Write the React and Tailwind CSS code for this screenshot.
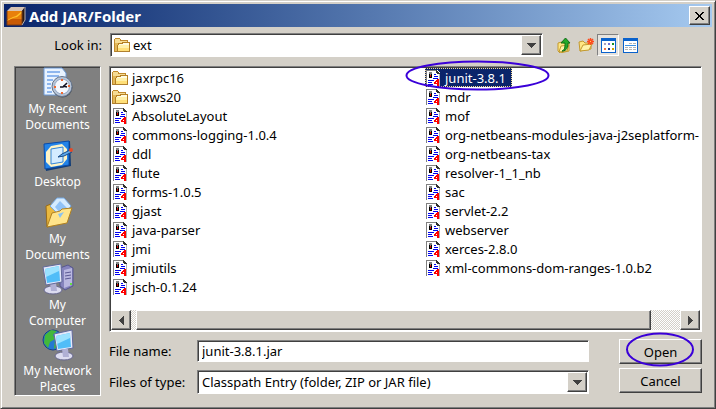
import React from "react";

const raised =
  "border border-t-white border-l-white border-r-[#404040] border-b-[#404040] bg-[#d4d0c8] shadow-[inset_-1px_-1px_0_#808080]";
const sunken =
  "border border-t-[#808080] border-l-[#808080] border-r-white border-b-white";

function Folder() {
  return (
    <svg width="16" height="16" viewBox="0 0 16 16" shapeRendering="crispEdges" aria-hidden="true" className="shrink-0">
      <path d="M0 2h1V1h5v1h1v1h7v3h2v9H0z" fill="#c08a2c" />
      <path d="M1 2h5v2h7v2H1z" fill="#f6dc94" />
      <path d="M1 6h3v8H1z" fill="#e2b85a" />
      <path d="M3 8h1V6h4V5h8v9H3z" fill="#b57f22" />
      <path d="M5 7h4V6h6v2H5z" fill="#fffbe0" />
      <path d="M4 8h11v3H4z" fill="#fff0a8" />
      <path d="M4 11h11v3H4z" fill="#ffdf78" />
      <path d="M1 14h15v1H1z" fill="#b08030" />
    </svg>
  );
}

function JarFile() {
  return (
    <svg width="16" height="16" viewBox="0 0 16 16" shapeRendering="crispEdges" aria-hidden="true" className="shrink-0">
      <path d="M1 0h11l3 3v13H1z" fill="#fff" />
      <path d="M1 0h11v1H2v15H1z" fill="#808080" />
      <path d="M14 4h1v12h-1z" fill="#b0b0b0" />
      <path d="M11 0h1v1h1v1h1v1h1v1h-3V3h-1z" fill="#303030" />
      <path d="M4 2h3v3H4z" fill="#808080" />
      <path d="M4 4h1v4H4zM6 4h1v4H6zM4 7h3v1H4z" fill="#000" />
      <path d="M5 5h1v2H5z" fill="#e00000" />
      <path d="M9 4h2v1H9zM9 6h4v1H9zM8 8h5v1H8zM3 10h6v1H3zM3 12h4v1H3zM3 14h5v1H3z" fill="#0000f0" />
      <path d="M12 9h2v7h-2v-2H9v-2h1v-1h1v-1h1zM11 12v1h1v-1z" fill="#f00" fillRule="evenodd" />
    </svg>
  );
}

function RecentIcon() {
  return (
    <svg width="32" height="32" viewBox="0 0 32 32" aria-hidden="true">
      <path d="M2 1h18l4 5v22H2z" fill="#e9f3ff" stroke="#6c9ad8" />
      <path d="M5 5h13M5 9h12M5 13h6M5 17h4M5 21h4M5 25h5" stroke="#8eb6ee" strokeWidth="2" />
      <circle cx="20.500" cy="20.500" r="10" fill="#4d5258" />
      <circle cx="20" cy="19.500" r="10" fill="#b9c6d8" stroke="#65758e" />
      <circle cx="20" cy="19.500" r="7.500" fill="#f5f8ff" stroke="#92a6c4" />
      <path d="M18 20h3l4-4M21 19l4 1" stroke="#112" strokeWidth="1.600" fill="none" />
      <path d="M19 12h2v2h-2zM19 25h2v2h-2zM12 19h2v2h-2zM26 18h2v2h-2z" fill="#f06830" />
    </svg>
  );
}

function DesktopIcon() {
  return (
    <svg width="32" height="32" viewBox="0 0 32 32" aria-hidden="true">
      <path d="M3 4L28 1l1 25-25 5z" fill="#123d76" />
      <path d="M2 4L27 1v24L3 29z" fill="#2383e8" stroke="#0c4ca8" />
      <path d="M4 12l5-6 11-2 5 5v10l-5 6-11 2-5-5z" fill="#fff4c6" />
      <path d="M9 9l12-2v15L9 24z" fill="#d4ecff" stroke="#3285d8" />
      <path d="M16 17l4-3 8-4 2 2-8 4z" fill="#5ea9ed" stroke="#184b87" />
      <circle cx="29" cy="10" r="2" fill="#e34a28" />
    </svg>
  );
}

function DocumentsIcon() {
  return (
    <svg width="32" height="32" viewBox="0 0 32 32" aria-hidden="true">
      <path d="M4 9l5-2 3 3 13 1v14L5 30z" fill="#e9b83f" stroke="#9a6b16" />
      <path d="M8 9L15 1h7l7 8-9 12z" fill="#d5ebff" stroke="#75a9e3" />
      <path d="M13 10l5-6 7 7-6 6z" fill="#90c2f7" />
      <path d="M5 30l5-14 8-2 2-2 10-1-5 15z" fill="#ffe48a" stroke="#b18120" />
      <path d="M16 17l6-2-4 6z" fill="#8bc2ef" />
    </svg>
  );
}

function Monitor() {
  return (
    <g>
      <ellipse cx="11" cy="27" rx="9" ry="4" fill="#dcdcf0" stroke="#66668e" />
      <path d="M8 20h6l1 8H9z" fill="#b0b0d4" />
      <path d="M1 4l18-3 1 18-16 3z" fill="#e4e8fa" stroke="#62699a" />
      <path d="M3 6l14-3 1 15-13 2z" fill="#50bdf8" />
      <path d="M3 6l14-3v5L4 14z" fill="#9be2ff" />
    </g>
  );
}

function ComputerIcon() {
  return (
    <svg width="32" height="32" viewBox="0 0 32 32" aria-hidden="true">
      <path d="M18 5l8-3 5 3v18l-8 4-5-4z" fill="#8583bd" stroke="#56568e" />
      <path d="M22 7l8-2v17l-8 3z" fill="#b9b7e0" />
      <path d="M23 10l6-1M23 13l6-1M23 16l6-1" stroke="#5b5993" />
      <path d="M28 20h2v2h-2z" fill="#65e040" />
      <Monitor />
    </svg>
  );
}

function NetworkIcon() {
  return (
    <svg width="32" height="32" viewBox="0 0 32 32" aria-hidden="true">
      <circle cx="11" cy="11" r="10" fill="#2478d2" stroke="#173f87" />
      <path d="M3 6l6-5 6 1-4 4 2 4-5 3-2 6-4-5zM13 10l5-2v7l-6 5z" fill="#43b83a" />
      <path d="M12 5l18-4 1 18-16 3z" fill="#e4e8fa" stroke="#62699a" />
      <ellipse cx="22" cy="27" rx="9" ry="4" fill="#dcdcf0" stroke="#66668e" />
      <path d="M20 20h6l1 8h-6z" fill="#b0b0d4" />
      <path d="M14 7l14-3 1 14-13 2z" fill="#50bdf8" />
      <path d="M14 7l14-3v5l-13 6z" fill="#9be2ff" />
    </svg>
  );
}

const places = [
  { lines: ["My Recent", "Documents"], Icon: RecentIcon, space: "mb-[7px]" },
  { lines: ["Desktop"], Icon: DesktopIcon, space: "mb-[7px]" },
  { lines: ["My", "Documents"], Icon: DocumentsIcon, space: "" },
  { lines: ["My", "Computer"], Icon: ComputerIcon, space: "" },
  { lines: ["My Network", "Places"], Icon: NetworkIcon, space: "" },
];

const folders = ["jaxrpc16", "jaxws20"];
const selected = "junit-3.8.1";
const columns = [
  {
    width: "w-[313px] shrink-0",
    names: ["jaxrpc16", "jaxws20", "AbsoluteLayout", "commons-logging-1.0.4", "ddl", "flute", "forms-1.0.5", "gjast", "java-parser", "jmi", "jmiutils", "jsch-0.1.24"],
  },
  {
    width: "min-w-0 flex-1",
    names: [selected, "mdr", "mof", "org-netbeans-modules-java-j2seplatform-", "org-netbeans-tax", "resolver-1_1_nb", "sac", "servlet-2.2", "webserver", "xerces-2.8.0", "xml-commons-dom-ranges-1.0.b2"],
  },
];

function DropArrow() {
  return (
    <span className={`pointer-events-none absolute top-px right-px bottom-px flex w-5 items-center justify-center ${raised}`}>
      <svg width="9" height="5" viewBox="0 0 9 5" shapeRendering="crispEdges" aria-hidden="true">
        <path d="M0 0h9v1H8v1H7v1H6v1H5v1H4V4H3V3H2V2H1V1H0z" fill="#404040" />
      </svg>
    </span>
  );
}

function FileItem({ name }) {
  const isSelected = name === selected;
  return (
    <li className={isSelected ? "relative flex h-[19px] w-fit items-center bg-[#0a246a] pr-[2px] text-white outline-1 -outline-offset-1 outline-dotted outline-[#f5db95]" : "flex h-[19px] items-center overflow-hidden"}>
      {folders.includes(name) ? <Folder /> : <JarFile />}
      <button type="button" aria-pressed={isSelected} className="px-1 whitespace-nowrap">{name}</button>
      {isSelected && (
        <svg width="145" height="31" viewBox="0 0 145 31" fill="none" aria-hidden="true" className="pointer-events-none absolute -top-2 -left-5 z-10 max-w-none">
          <ellipse cx="72.500" cy="15.500" rx="71" ry="14" stroke="#3a00d8" strokeWidth="2" />
        </svg>
      )}
    </li>
  );
}

export default function App() {
  return (
    <main className="flex min-h-screen w-full flex-col border border-t-[#d4d0c8] border-l-[#d4d0c8] border-r-[#404040] border-b-[#404040] bg-[#d4d0c8] p-[3px] font-['Noto_Sans',sans-serif] text-[13px] leading-4 text-black shadow-[inset_1px_1px_0_white,inset_-1px_-1px_0_#808080]">
      <header className="flex h-[23px] shrink-0 items-center bg-linear-to-r from-[#0a246a] to-[#a6caf0] px-[2px]">
        <svg width="20" height="20" viewBox="0 0 20 20" aria-hidden="true">
          <path d="M1 5l4-4h14l-3 4z" fill="#d8c4b4" />
          <path d="M1 5h15v14H1z" fill="#e8800c" />
          <path d="M1 13h15v6H1z" fill="#c85a04" />
          <path d="M16 5l3-4v13l-3 5z" fill="#2d1a12" />
          <path d="M1 14l6-3 3-1 6-5v2l-5 4-4 1-6 3z" fill="#ffc228" />
          <path d="M1 5v14h15V5" fill="none" stroke="#7a3c14" />
          <path d="M19 1v13l-3 5" fill="none" stroke="#b8b0b0" />
        </svg>
        <h1 className="ml-[3px] flex-1 text-[15px] font-bold text-white">Add JAR/Folder</h1>
        <button type="button" aria-label="Close" className={`flex h-[19px] w-[21px] items-center justify-center ${raised}`}>
          <svg width="9" height="8" viewBox="0 0 9 8" shapeRendering="crispEdges" aria-hidden="true">
            <path d="M0 0h2v1h1v1h1v1h1V2h1V1h1V0h2v1H8v1H7v1H6v2h1v1h1v1h1v1H7V7H6V6H5V5H4v1H3v1H2v1H0V7h1V6h1V5h1V3H2V2H1V1H0z" fill="#000" />
          </svg>
        </button>
      </header>

      <div className="mt-[6px] flex h-6 shrink-0 items-center pr-[71px]">
        <label htmlFor="look" className="w-[106px] shrink-0 pr-2 text-right">Look in:</label>
        <div className={`relative flex h-6 min-w-0 flex-1 items-center bg-white pl-[3px] inset-shadow-[1px_1px_0_#404040] ${sunken}`}>
          <Folder />
          <select id="look" className="h-5 flex-1 appearance-none bg-transparent pl-[3px] outline-none">
            <option>ext</option>
          </select>
          <DropArrow />
        </div>
        <div className="ml-[10px] flex items-center">
          <button type="button" aria-label="Up one level" className="flex size-[22px] items-center justify-center">
            <svg width="16" height="16" viewBox="0 0 16 16" aria-hidden="true">
              <path d="M2 6l4-1 1 1 6 0v8l-9 2-2-2z" fill="#ffe783" stroke="#c39a30" />
              <path d="M3 15l2-6 8-1-2 6z" fill="#fff3a8" stroke="#c39a30" />
              <path d="M6 14c3-1 3-4 3-8H5L9.500 1 14 6h-2c0 4-1 8-6 8z" fill="#24a928" stroke="#116f18" />
            </svg>
          </button>
          <button type="button" aria-label="Create new folder" className="flex size-[22px] items-center justify-center">
            <svg width="16" height="16" viewBox="0 0 16 16" aria-hidden="true">
              <path d="M1 5l4-1 2 2h6v6L2 14z" fill="#ffe783" stroke="#c39a30" />
              <path d="M2 14l3-6 9-1-3 6z" fill="#fff3a8" stroke="#c39a30" />
              <path d="M12.500 1v7M9 4.500h7M10 2l5 5M15 2l-5 5" stroke="#ff4a1c" strokeWidth="1.500" />
              <path d="M12 4h1v1h-1z" fill="#ffd060" />
            </svg>
          </button>
          <button type="button" aria-label="List" aria-pressed="true" className={`flex size-[22px] items-center justify-center bg-[#e6e3de] ${sunken}`}>
            <svg width="15" height="15" viewBox="0 0 15 15" shapeRendering="crispEdges" aria-hidden="true">
              <path d="M0 0h15v15H0z" fill="#0a62cc" />
              <path d="M1 3h13v11H1z" fill="#fff" />
              <path d="M3 5h2v2H3z" fill="#a8a0c0" />
              <path d="M7 5h2v2H7z" fill="#7070d8" />
              <path d="M11 5h2v2h-2z" fill="#189028" />
              <path d="M3 10h2v2H3z" fill="#f07048" />
              <path d="M7 10h2v2H7z" fill="#103890" />
              <path d="M11 10h2v2h-2z" fill="#d0a000" />
            </svg>
          </button>
          <button type="button" aria-label="Details" className="flex size-[22px] items-center justify-center">
            <svg width="15" height="15" viewBox="0 0 15 15" shapeRendering="crispEdges" aria-hidden="true">
              <path d="M0 0h15v15H0z" fill="#0a62cc" />
              <path d="M1 3h13v11H1z" fill="#fff" />
              <path d="M6 5h3v1H6zM10 5h3v1h-3zM2 9h3v1H2zM6 9h3v1H6zM10 9h3v1h-3zM2 11h3v1H2zM6 11h3v1H6zM10 11h3v1h-3z" fill="#b4b4b4" />
              <path d="M2 7h11v1H2z" fill="#3c90e0" />
            </svg>
          </button>
        </div>
      </div>

      <div className="mt-[9px] flex flex-1 pr-[10px] pb-[9px] pl-[10px]">
        <nav aria-label="Places" className={`w-[87px] shrink-0 bg-[#808080] text-[12px] text-white inset-shadow-[1px_1px_0_#404040] ${sunken}`}>
          {places.map(({ lines, Icon, space }) => (
            <button type="button" key={lines.join(" ")} className={`flex w-full flex-col items-center ${space}`}>
              <Icon />
              <span className="pt-[2px]">
                {lines.map((line) => <span key={line} className="block">{line}</span>)}
              </span>
            </button>
          ))}
        </nav>

        <section className="ml-2 min-w-0 flex-1">
          <div className={`bg-white p-px inset-shadow-[1px_1px_0_#404040] ${sunken}`}>
            <div className="flex pb-[14px] pl-px">
              {columns.map(({ names, width }) => (
                <ul key={names[0]} className={width}>
                  {names.map((name) => <FileItem key={name} name={name} />)}
                </ul>
              ))}
            </div>
            <div className="flex h-5 bg-[repeating-conic-gradient(#fff_0_25%,#d4d0c8_0_50%)] bg-size-[2px_2px]">
              <button type="button" aria-label="Scroll left" className={`flex w-5 items-center justify-center ${raised}`}>
                <svg width="5" height="9" viewBox="0 0 5 9" shapeRendering="crispEdges" aria-hidden="true">
                  <path d="M5 0v9H4V8H3V7H2V6H1V5H0V4h1V3h1V2h1V1h1V0z" fill="#404040" />
                </svg>
              </button>
              <div className={`mr-[29px] ml-[5px] flex-1 ${raised}`} />
              <button type="button" aria-label="Scroll right" className={`flex w-5 items-center justify-center ${raised}`}>
                <svg width="5" height="9" viewBox="0 0 5 9" shapeRendering="crispEdges" aria-hidden="true">
                  <path d="M0 0v9h1V8h1V7h1V6h1V5h1V4H4V3H3V2H2V1H1V0z" fill="#404040" />
                </svg>
              </button>
            </div>
          </div>

          <div className="mt-[7px] flex">
            <div className="grid flex-1 grid-cols-[88px_1fr] items-center gap-y-2 pt-px">
              <label htmlFor="filename">File name:</label>
              <input id="filename" defaultValue="junit-3.8.1.jar" className={`h-[22px] w-full min-w-0 bg-white px-1 outline-none inset-shadow-[1px_1px_0_#404040] ${sunken}`} />
              <label htmlFor="filetype">Files of type:</label>
              <div className={`relative flex h-6 items-center bg-white inset-shadow-[1px_1px_0_#404040] ${sunken}`}>
                <select id="filetype" className="ml-px h-5 w-full appearance-none bg-transparent pl-[3px] outline-none">
                  <option>Classpath Entry (folder, ZIP or JAR file)</option>
                </select>
                <DropArrow />
              </div>
            </div>
            <div className="ml-[30px] flex w-[83px] flex-col gap-1">
              <button type="button" className={`relative h-[25px] ${raised}`}>
                Open
                <svg width="70" height="35" viewBox="0 0 70 35" fill="none" aria-hidden="true" className="pointer-events-none absolute -top-2 left-[5px] max-w-none">
                  <ellipse cx="35" cy="17.500" rx="33" ry="16" stroke="#3a00d8" strokeWidth="2" />
                </svg>
              </button>
              <button type="button" className={`h-[25px] ${raised}`}>Cancel</button>
            </div>
          </div>
        </section>
      </div>
    </main>
  );
}
